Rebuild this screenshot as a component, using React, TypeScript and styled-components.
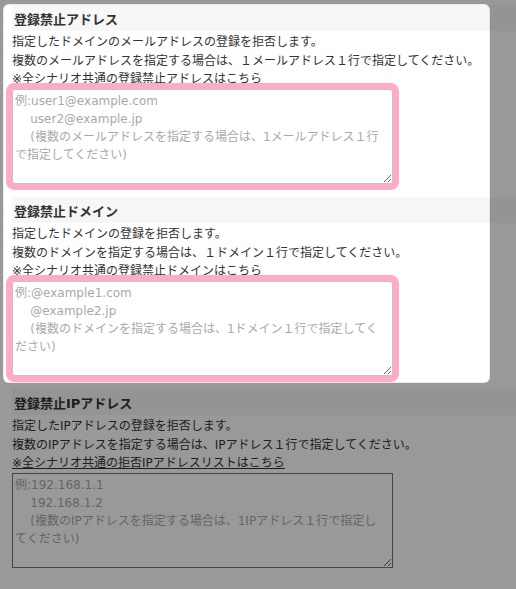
import styled, { createGlobalStyle } from "styled-components";

const GlobalStyle = createGlobalStyle`
	body {
		margin: 0;
		background: #fff;
		color: #333;
		font-family: "DejaVu Sans", "Noto Sans CJK JP", sans-serif;
	}
`;

interface BlockItem {
	title: string;
	lines: string[];
	link: string;
	placeholder: string;
}

const Page = styled.div`
	min-height: 100vh;
	box-sizing: border-box;
	padding: 5px 0 0 12px;
`;

// tour spotlight: everything outside this box is dimmed
const Spotlight = styled.div`
	position: relative;
	display: flow-root;

	&::after {
		content: "";
		position: absolute;
		top: -1px;
		left: -9px;
		right: 26px;
		bottom: 6px;
		border-radius: 6px;
		border: 1px solid rgba(0, 0, 0, 0.08);
		box-shadow: 0 0 0 9999px rgba(0, 0, 0, 0.4);
		pointer-events: none;
		z-index: 10;
	}
`;

const Section = styled.section`
	margin-bottom: 13px;
`;

const SectionTitle = styled.h3`
	margin: 0;
	height: 26px;
	box-sizing: border-box;
	padding: 4px 0 0 2px;
	background: #f7f7f7;
	font-size: 13px;
	font-weight: bold;
	line-height: 22px;
`;

const Description = styled.div`
	padding-top: 2px;
	height: 58px;
	box-sizing: border-box;
	font-size: 12px;
	line-height: 18.7px;
`;

const Line = styled.p`
	margin: 0;
`;

const NoteLink = styled.a`
	color: #333;
	text-decoration: underline;
`;

const Field = styled.textarea<{ $highlight?: boolean }>`
	display: block;
	position: relative;
	width: 381px;
	height: 95px;
	box-sizing: border-box;
	margin: 0;
	padding: 2px 5px 2px 2px;
	font-family: "DejaVu Sans", "Noto Sans CJK JP", sans-serif;
	font-size: 12px;
	line-height: 18px;
	color: #333;
	background: #fff;
	border: 1px solid ${(p) => (p.$highlight ? "#c4c4c4" : "#767676")};
	border-radius: ${(p) => (p.$highlight ? "3px" : "0")};
	box-shadow: ${(p) => (p.$highlight ? "0 0 0 6px #ffabc7" : "none")};
	outline: none;

	&::placeholder {
		color: #a9a9a9;
		opacity: 1;
	}
`;

const blocks: BlockItem[] = [
	{
		title: "登録禁止アドレス",
		lines: [
			"指定したドメインのメールアドレスの登録を拒否します。",
			"複数のメールアドレスを指定する場合は、１メールアドレス１行で指定してください。",
		],
		link: "※全シナリオ共通の登録禁止アドレスはこちら",
		placeholder:
			"例:user1@example.com\n    user2@example.jp\n    (複数のメールアドレスを指定する場合は、1メールアドレス１行で指定してください)",
	},
	{
		title: "登録禁止ドメイン",
		lines: [
			"指定したドメインの登録を拒否します。",
			"複数のドメインを指定する場合は、１ドメイン１行で指定してください。",
		],
		link: "※全シナリオ共通の登録禁止ドメインはこちら",
		placeholder:
			"例:@example1.com\n    @example2.jp\n    (複数のドメインを指定する場合は、1ドメイン１行で指定してください)",
	},
	{
		title: "登録禁止IPアドレス",
		lines: [
			"指定したIPアドレスの登録を拒否します。",
			"複数のIPアドレスを指定する場合は、IPアドレス１行で指定してください。",
		],
		link: "※全シナリオ共通の拒否IPアドレスリストはこちら",
		placeholder:
			"例:192.168.1.1\n    192.168.1.2\n    (複数のIPアドレスを指定する場合は、1IPアドレス１行で指定してください)",
	},
];

function Block({ item, highlight }: { item: BlockItem; highlight?: boolean }) {
	return (
		<Section>
			<SectionTitle>{item.title}</SectionTitle>
			<Description>
				{item.lines.map((l) => (
					<Line key={l}>{l}</Line>
				))}
				<Line>
					<NoteLink href="#">{item.link}</NoteLink>
				</Line>
			</Description>
			<Field $highlight={highlight} placeholder={item.placeholder} />
		</Section>
	);
}

export default function App() {
	return (
		<>
			<GlobalStyle />
			<Page>
				<Spotlight>
					<Block item={blocks[0]} highlight />
					<Block item={blocks[1]} highlight />
				</Spotlight>
				<Block item={blocks[2]} />
			</Page>
		</>
	);
}
